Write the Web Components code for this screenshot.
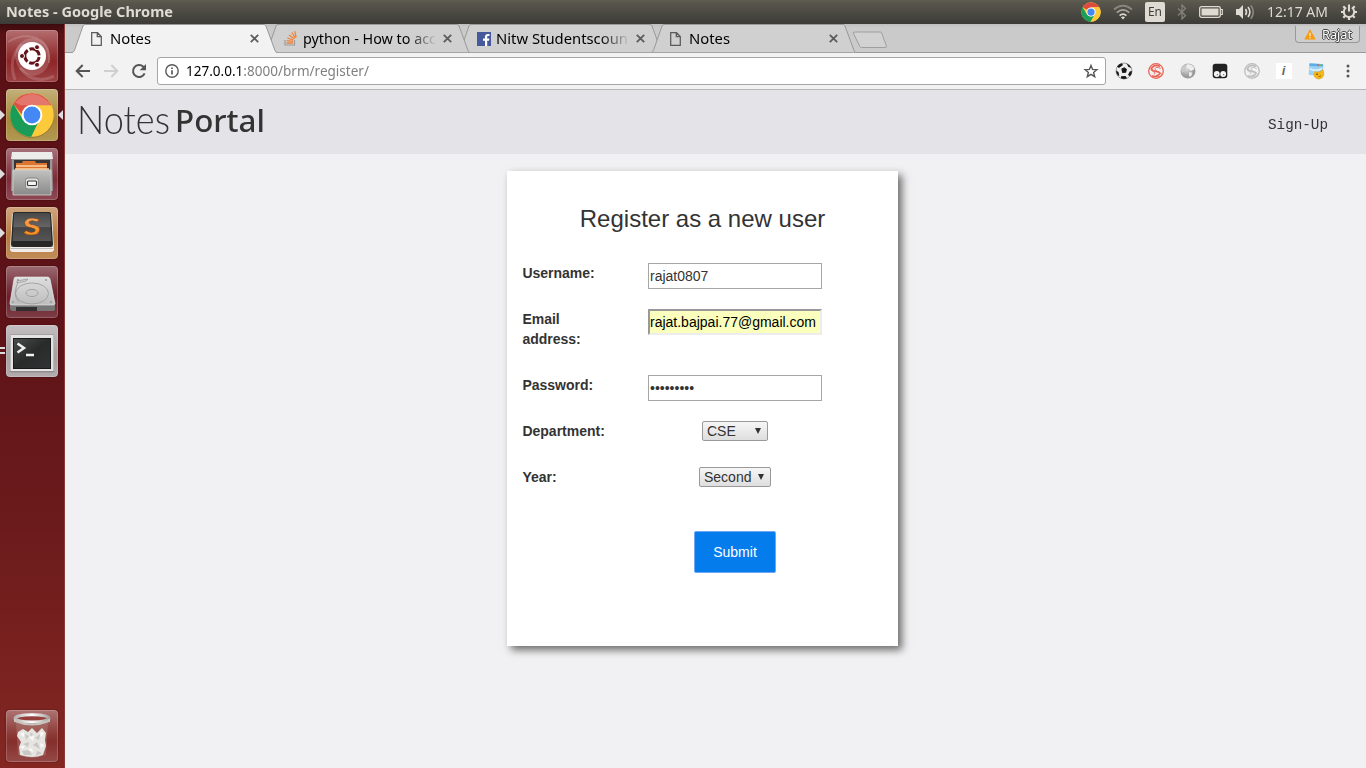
<!DOCTYPE html>
<html lang="en">
<head>
<meta charset="utf-8">
<title>Notes</title>
<style>
html,body{margin:0;height:768px;overflow:hidden;background:#f1f1f3}
</style>
</head>
<body>
<desktop-shell></desktop-shell>
<script>
const define = (name, css, html) => customElements.define(name, class extends HTMLElement {
  connectedCallback() {
    if (this.shadowRoot) return;
    const t = document.createElement('template');
    t.innerHTML = `<style>*{box-sizing:border-box}${css}</style>` + (typeof html === 'function' ? html(this) : html);
    this.attachShadow({mode: 'open'}).append(t.content.cloneNode(true));
  }
});

/* Text set to an exact advance width, given by the w attribute. */
customElements.define('fit-text', class extends HTMLElement {
  connectedCallback() {
    if (this.shadowRoot) return;
    const root = this.attachShadow({mode: 'open'});
    root.innerHTML = `<style>:host{display:block;flex:none;white-space:pre}span{display:inline-block;transform-origin:0 50%}</style><span><slot></slot></span>`;
    const fit = () => {
      const w = +this.getAttribute('w'), s = root.querySelector('span');
      this.style.width = w + 'px';
      if (s.offsetWidth) s.style.transform = `scaleX(${w / s.getBoundingClientRect().width})`;
    };
    queueMicrotask(() => { root.querySelector('span').style.transform = 'none'; fit(); });
  }
});

const chrome = `<circle cx="16" cy="16" r="15.5" fill="#fbc936"/>
<path d="M16 16 2.6 8.2A15.5 15.5 0 0 1 29.4 8.5H16z" fill="#dd4b3e"/>
<path d="M2.6 8.2 9.5 20 16 23.5 22 20 15.5 31.5A15.5 15.5 0 0 1 2.6 8.2" fill="#1a9f5b"/>
<path d="M29.4 8.5H16L22.5 12.2V20L15.5 31.5A15.5 15.5 0 0 0 29.4 8.5" fill="#fdca3c"/>
<circle cx="16" cy="16" r="7.3" fill="#fff"/><circle cx="16" cy="16" r="5.8" fill="#4587f3"/>`;

const icons = {
  chrome: [32, 32, chrome],
  wifi: [20, 16, `<g fill="none" stroke-width="1.7"><path d="M1 5.5Q10-2.2 19 5.5" stroke="#8b887f"/><path d="M3.8 8.6Q10 3.2 16.2 8.6" stroke="#aaa79f"/><path d="M6.6 11.6Q10 8.6 13.4 11.6" stroke="#dfdbd2"/></g><path d="M8 13.2Q10 11.6 12 13.2L10 15.5z" fill="#dfdbd2"/>`],
  bluetooth: [10, 16, `<path d="M1 4.5 8.5 11.5 5 15V1L8.5 4.5 1 11.5" fill="none" stroke="#85827a" stroke-width="1.3"/>`],
  battery: [24, 12, `<rect x=".7" y=".7" width="20.6" height="10.6" rx="1.8" fill="none" stroke="#dfdbd2" stroke-width="1.3"/><rect x="2.5" y="2.5" width="17" height="7" fill="#dfdbd2"/><path d="M22 3.5h1.3v5H22" fill="none" stroke="#dfdbd2" stroke-width="1.2"/>`],
  sound: [20, 16, `<path d="M1 5h3l4-4v14l-4-4H1z" fill="#dfdbd2"/><g fill="none" stroke-width="1.6"><path d="M10.5 5q2 3 0 6M13 3q3.8 5 0 10" stroke="#dfdbd2"/><path d="M15.8 1.2q5 6.8 0 13.6" stroke="#8b887f"/></g>`],
  gear: [18, 18, `<g fill="none" stroke="#dfdbd2"><path d="M6.2 4.5A5.2 5.2 0 1 0 11.8 4.5" stroke-width="2"/><path d="M9 1.5v7" stroke-width="2"/><path d="M1 9h3M14 9h3M3.3 3.3 5 5M14.7 3.3 13 5M3.3 14.7 5 13M14.7 14.7 13 13M9 14v3" stroke-width="2.2"/></g>`],
  page: [11, 14, `<path d="M.7.7h5.8l3.8 3.8v8.8H.7z M6.3.7v4h4" fill="none" stroke="#5a5a5a" stroke-width="1.25"/>`],
  stack: [13, 15, `<path d="M1 9v5h9.5V9" fill="none" stroke="#9a9b9c" stroke-width="1.2"/><g stroke="#f08337" stroke-width="1.3"><path d="M2.5 12H9M2.7 9.6l6.4.7M3.3 7l6 1.9M5 4l5.3 3.7M7.8 1.5 11.3 7M10.7.2l1.4 6.3"/></g>`],
  facebook: [14, 14, `<rect width="14" height="14" fill="#46599c"/><path d="M8 14V8.7H6V6.5h2V4.8C8 2.8 9.2 2 10.8 2H12.5v2.1H11.2c-.8 0-1 .4-1 1v1.4h2.2L12 8.7h-1.8V14z" fill="#fff"/>`],
  close: [9, 9, `<path d="M.8.8 8.2 8.2M8.2.8.8 8.2" stroke="#5c5c5c" stroke-width="1.8"/>`],
  back: [16, 14, `<path d="M15 7H2M7.7 1 1.7 7l6 6" fill="none" stroke="#555" stroke-width="2"/>`],
  forward: [16, 14, `<path d="M1 7h13M8.3 1l6 6-6 6" fill="none" stroke="#cfcfcf" stroke-width="2"/>`],
  reload: [16, 16, `<path d="M13.6 10.3A6 6 0 1 1 12.3 3.8L14 5.6" fill="none" stroke="#555" stroke-width="2"/><path d="M15 1v6.3H8.7z" fill="#555"/>`],
  info: [14, 14, `<circle cx="7" cy="7" r="6.2" fill="none" stroke="#5a5a5a" stroke-width="1.4"/><path d="M7 6.2v4.3M7 3.4V5" stroke="#5a5a5a" stroke-width="1.7"/>`],
  star: [16, 16, `<path d="M8 2.4 9.6 6.4 13.9 6.7 10.6 9.5 11.7 13.7 8 11.4 4.3 13.7 5.4 9.5 2.1 6.7 6.4 6.4z" fill="none" stroke="#555" stroke-width="1.4"/>`],
  ball: [18, 18, `<circle cx="9" cy="9" r="8" fill="#eee" stroke="#777" stroke-width=".7"/><path d="M6.3 6.8 9.3 5.2 12 7.3 11 10.8 7.3 11zM2 4.5Q4 1.5 7 1.3L8 3 4 6zM11.5 1.5Q15 2.5 16.3 6L13.5 5zM1 8.5 3.5 10 4.3 13.8 2.8 13.5Q1 11 1 8.5M17 9Q17 12 15 14.3L13 13 14.7 9.5zM6 14.2 10.5 14 12 16.3Q9 17.5 6 16.3z" fill="#171717"/>`],
  sred: [16, 16, `<g fill="none" stroke="#ea6557"><circle cx="8" cy="8" r="7.3" stroke-width="1.3"/><path d="M12 3.4Q7 1 4.4 4.2T8 8.3 10.3 12 4 12.5" stroke-width="1.7"/><path d="M12.8 5.6Q8 3.2 7.2 5.2T12 10 8.2 14M3.2 3.5Q1.6 7 5.3 8.7T5.8 11" stroke-width=".9"/></g>`],
  sgray: [16, 16, `<g fill="none" stroke="#bdbdbd"><circle cx="8" cy="8" r="7.3" stroke-width="1.3"/><path d="M12 3.4Q7 1 4.4 4.2T8 8.3 10.3 12 4 12.5" stroke-width="1.7"/><path d="M12.8 5.6Q8 3.2 7.2 5.2T12 10 8.2 14M3.2 3.5Q1.6 7 5.3 8.7T5.8 11" stroke-width=".9"/></g>`],
  globe: [16, 16, `<defs><radialGradient id="g" cx=".4" cy=".35"><stop offset="0" stop-color="#ddd"/><stop offset="1" stop-color="#9c9c9c"/></radialGradient></defs><circle cx="8" cy="8" r="7.5" fill="url(#g)"/><path d="M7 1.3Q13 1 14.5 6L11 8 8 5.5 6 4zM9 9.2l3.3.2-1 3.6-2.3.5z" fill="#eee"/><path d="M1 6Q3 2 5 2l1 5-4 3z" fill="#c9c9c9"/>`],
  monkey: [16, 16, `<rect x=".7" y=".7" width="14.6" height="14.6" rx="2.8" fill="#222"/><circle cx="4.8" cy="11" r="2.9" fill="#f5f5f5"/><circle cx="11.2" cy="11" r="2.9" fill="#f5f5f5"/><circle cx="5.3" cy="11.7" r=".6" fill="#555"/><circle cx="11.7" cy="11.7" r=".6" fill="#555"/>`],
  page2: [16, 16, `<rect width="16" height="16" fill="#fff"/><text x="5.7" y="12" font-family="Liberation Sans" font-style="italic" font-weight="700" font-size="13" fill="#6a6a6a">i</text>`],
  webpig: [18, 18, `<rect x="2" y="1.5" width="14" height="12" rx="1" transform="rotate(4 9 8)" fill="#9bd1f4"/><path d="M2.5 1.5 16 2.3V4.5L2.4 3.9z" fill="#5aafe6"/><circle cx="11" cy="3" r=".9" fill="#e85b50"/><circle cx="14" cy="3.2" r=".9" fill="#7dc13b"/><path d="M3 6Q9 9 15 5.5v2Q9 11 3 8z" fill="#d8effc"/><path d="M7.5 9.5 9.5 10l3-.2 3.4-2 .8 2q.8 6.6-4.7 7.2-5.3 0-5-5.4" fill="#f5b619" stroke="#d9980f" stroke-width=".5"/><circle cx="10" cy="12.2" r=".8" fill="#4d3305"/><path d="M11.5 14.4q1.4.8 2.4-.8" fill="none" stroke="#7d4f05" stroke-width=".8"/>`],
  more: [4, 16, `<g fill="#555"><circle cx="2" cy="3" r="1.5"/><circle cx="2" cy="8" r="1.5"/><circle cx="2" cy="13" r="1.5"/></g>`],
  warn: [12, 11, `<path d="M6 .3 11.7 10.6H.3z" fill="#f89a0b"/><path d="M6 3.7v3.5M6 8v1.3" stroke="#fff" stroke-width="1.1"/>`],
  newtab: [36, 18, `<path d="M3.5 1H28.2Q29.2 1 29.7 2L34.4 15Q34.7 16.5 33.3 16.5H9.3Q8.3 16.5 7.8 15.5L1.3 2Q1.2 1 3.5 1z" fill="#d2d2d2" stroke="#9f9f9f" stroke-width="1"/>`],
  ubuntu: [52, 52, `<g fill="none" stroke="#fff" stroke-opacity=".16"><path d="M2 12Q14 4 27 7 45 12 43 33" stroke-width="2"/><path d="M9 50Q1 28 16 14M48 46Q28 56 14 38" stroke-width="3"/></g><path d="M9 27Q10 9 27 8q17 3 17 21-2 14-16 17Q11 44 9 27" fill="#fff" opacity=".17"/><circle cx="26" cy="26" r="14" fill="#fff"/><circle cx="26" cy="26" r="7.2" fill="none" stroke="#641418" stroke-width="3" stroke-dasharray="13.1 2" stroke-dashoffset="-1"/><g fill="#641418" stroke="#fff" stroke-width="1"><circle cx="16" cy="26" r="2.5"/><circle cx="31" cy="17.2" r="2.5"/><circle cx="31" cy="34.8" r="2.5"/></g>`],
  bigchrome: [52, 52, `<circle cx="26" cy="27" r="22" fill="#69521a" opacity=".4"/><g transform="translate(3.6 3.6) scale(1.4)"><circle cx="16" cy="16" r="15.6" fill="#fdca3c"/><path d="M2.6 8A15.6 15.6 0 0 1 29.8 9H16L9 16z" fill="#dd5145"/><path d="M2.7 7.9 9.6 19.5 16 22.6 20.5 21 15.5 31.6A15.6 15.6 0 0 1 2.7 7.9" fill="#189c58"/><path d="M4 7Q16-5 28 7L29 9H8z" fill="#fff" opacity=".22"/><circle cx="16" cy="16" r="7.4" fill="#fff"/><circle cx="16" cy="16" r="6" fill="#4488f4"/></g>`],
  files: [52, 52, `<defs><linearGradient id="f" x2="0" y2="1"><stop stop-color="#c1c1c0"/><stop offset="1" stop-color="#898989"/></linearGradient></defs><path d="M6 5H46L47 43H5z" fill="#989696"/><path d="M6 4H46L47 11H5z" fill="#ececea"/><rect x="8" y="12" width="36" height="11" fill="#383536"/><path d="M10 15h6l1-2h12l1 2h11v7H10z" fill="#dd7532"/><path d="M10 18H41M9 21H43" stroke="#ffd49e" stroke-width="1.4"/><path d="M7 22H45V47H7z" fill="url(#f)" stroke="#d6d6d4" stroke-width=".8"/><rect x="19.5" y="30" width="13" height="11" rx="2.5" fill="#dededc" stroke="#858585"/><rect x="21.5" y="33" width="9" height="4.5" rx="1" fill="#f4f4f3" stroke="#373737" stroke-width="1.1"/>`],
  sublime: [52, 52, `<defs><linearGradient id="s" x2="0" y2="1"><stop stop-color="#494949"/><stop offset=".5" stop-color="#656565"/><stop offset=".52" stop-color="#454545"/><stop offset="1" stop-color="#555"/></linearGradient><linearGradient id="o" x2="0" y2="1"><stop stop-color="#eca86e"/><stop offset="1" stop-color="#ff8906"/></linearGradient></defs><path d="M6 7 4 42Q4 45 7 45H45Q48 45 48 42L46 7z" fill="#f1ece8"/><path d="M4.5 39.5h43M4.5 41.5h43" stroke="#999" stroke-width=".6"/><path d="M9 5H43Q45 5 45.2 8L47 37Q47 40 44 40H8Q5 40 5 37L6.8 8Q7 5 9 5" fill="#272727"/><path d="M10 6H42Q44 6 44 8L45.5 34H6.5L8 8Q8 6 10 6" fill="url(#s)"/><text x="17.1" y="28.3" font-family="Lato" font-weight="900" font-size="23" textLength="17.5" lengthAdjust="spacingAndGlyphs" fill="url(#o)" stroke="#6b3519" stroke-width=".4">S</text>`],
  disk: [52, 52, `<defs><linearGradient id="d" x2="0" y2="1"><stop stop-color="#dedede"/><stop offset="1" stop-color="#bdbdbd"/></linearGradient></defs><path d="M10 12 42 12Q44 12 44.5 14L49 37v6Q49 45 46 45H7Q4 45 4 42V37L8 14Q8 12 10 12" fill="#777"/><path d="M10 11H42Q43 11 44 13L49 38Q49 39 46 39H7Q3 39 4 37L8 13Q8 11 10 11" fill="url(#d)" stroke="#eee" stroke-width=".6"/><path d="M10 41H31V45H10z" fill="#303030"/><g fill="none" stroke="#999" stroke-width=".8"><ellipse cx="26" cy="27.5" rx="16.5" ry="10.5"/><ellipse cx="26" cy="27" rx="6" ry="3.6"/><path d="M11 15 22 13 20 15 11 17zM12 16Q6 30 13 36"/></g><g fill="#969696"><circle cx="12" cy="14" r="1"/><circle cx="40" cy="14" r="1"/><circle cx="7" cy="36" r="1"/><circle cx="45" cy="36" r="1"/></g>`],
  terminal: [52, 52, `<defs><linearGradient id="t" x2="1" y2="1"><stop stop-color="#4a4b4b"/><stop offset=".5" stop-color="#292b2b"/><stop offset="1" stop-color="#303333"/></linearGradient></defs><rect x="4" y="9.5" width="44" height="38" rx="1" fill="#918d8e"/><rect x="4.5" y="10" width="43" height="36" fill="#e4e3e2"/><rect x="7" y="13" width="38" height="31" fill="#181a1b"/><rect x="8" y="14" width="36" height="29" fill="url(#t)"/><path d="M11.5 18.5 18 23 11.5 27.5M20 30H28" fill="none" stroke="#f1f1ef" stroke-width="2.5"/>`],
  trash: [52, 52, `<defs><linearGradient id="r"><stop stop-color="#b5b2af"/><stop offset=".5" stop-color="#fff"/><stop offset="1" stop-color="#a4a09e"/></linearGradient></defs><path d="M10 12 12 45Q26 51 40 45L42 12z" fill="#b88b83" opacity=".35"/><path d="M12 22 17 19 22 22 26 18 31 23 36 18 40 23 39 30 40 36 37 45Q27 49 14 45L13 37 15 32 11 26z" fill="#e5e4e0"/><g fill="#c9c7c3"><path d="M19 24 23 26 20 30zM29 28 34 24 33 30zM17 34 23 32 22 37zM27 35 31 32 34 39zM16 41 23 40 26 45 18 45zM31 41 36 43 30 46zM24 22 27 24 25 27z"/></g><g fill="#fafaf7"><path d="M14 24 18 22 18 27zM23 27 28 26 27 31zM34 22 38 23 35 27zM14 37 17 39 19 35zM34 33 38 35 35 38zM25 38 28 42 22 40z"/></g><ellipse cx="26" cy="8.3" rx="17" ry="3.6" fill="#963e3b" stroke="url(#r)" stroke-width="3"/><path d="M9 9v2Q26 18 43 11v-2" fill="none" stroke="#c6c3bf" stroke-width="2"/>`]
};
define('line-icon', `:host{display:block;flex:none}svg{display:block}`, el => {
  const [w, h, body] = icons[el.getAttribute('name')], s = el.getAttribute('size');
  return `<svg width="${s || w}" height="${s || h}" viewBox="0 0 ${w} ${h}">${body}</svg>`;
});

define('menu-bar', `:host{display:flex;height:24px;align-items:center;justify-content:space-between;padding-left:6px;padding-right:8px;background:linear-gradient(#605d50 0,#5a574e 8%,#3c3b37 100%);color:#dfdbd2;font:14px/24px "Noto Sans",sans-serif}
.title{font-weight:700}.tray{display:grid;grid-template-columns:20px 20px 20px 10px 24px 20px 61px 18px;column-gap:12px;align-items:center;justify-items:start}
.en{width:20px;height:20px;border-radius:2px;background:#dfdbd2;color:#3c3b37;font-size:12.5px;line-height:20px;padding-left:3px}`,
`<fit-text class="title" w="167">Notes - Google Chrome</fit-text>
<div class="tray"><line-icon name="chrome" size="20"></line-icon><line-icon name="wifi"></line-icon><div class="en"><fit-text w="14">En</fit-text></div><line-icon name="bluetooth"></line-icon><line-icon name="battery"></line-icon><line-icon name="sound"></line-icon><fit-text w="61">12:17 AM</fit-text><line-icon name="gear"></line-icon></div>`);

define('launcher-tile', `:host{display:flex;align-items:center;position:relative;height:52px;padding-left:6px}
.t{width:52px;height:52px;border-radius:4px;background:linear-gradient(#fff5,#fff1 45%,#fff0 60%,#fff2),var(--tile);box-shadow:inset 0 0 0 1px #ffffff30,0 0 2px #0006}
.l,.r,.eq{position:absolute;top:21px;width:0;height:0;border:5px solid transparent}
.l{left:0;border-left-color:#ddd;border-right:0}.r{right:1px;border-right-color:#ddd;border-left:0}
.eq{left:0;top:22px;width:5px;height:7px;border:solid #ddd;border-width:2px 0}`,
el => { const m = el.getAttribute('mark') || ''; return `<div class="t"><line-icon name="${el.getAttribute('icon')}"></line-icon></div>` + (m.includes('l') ? '<i class="l"></i>' : '') + (m.includes('r') ? '<i class="r"></i>' : '') + (m.includes('e') ? '<i class="eq"></i>' : ''); });

define('app-launcher', `:host{display:flex;flex-direction:column;gap:7px;width:65px;padding:6px 0 6px;background:linear-gradient(#3c0b0e 0,#5a1116 10px,#5e1318 40%,#6c1b1c 68%,#842722 100%);border-right:1px solid #8a3a37}.sp{flex:1}`,
`<launcher-tile icon="ubuntu" style="--tile:#8e2628"></launcher-tile>
<launcher-tile icon="bigchrome" mark="lr" style="--tile:#a8893a"></launcher-tile>
<launcher-tile icon="files" mark="l" style="--tile:#7d2d3a"></launcher-tile>
<launcher-tile icon="sublime" mark="l" style="--tile:#b87b3f"></launcher-tile>
<launcher-tile icon="disk" style="--tile:#6a202a"></launcher-tile>
<launcher-tile icon="terminal" mark="e" style="--tile:#a79fa2"></launcher-tile>
<div class="sp"></div><launcher-tile icon="trash" style="--tile:#852e2b"></launcher-tile>`);

define('browser-tab', `:host{display:block;flex:none;position:relative;width:205px;height:29px;margin-right:-12px}
.bg{position:absolute;inset:0}.row{position:relative;display:flex;height:29px;align-items:center;padding-left:18px}
.ic{width:20px;padding-left:1px}.label{width:134px;overflow:hidden;font:15px/20px "Noto Sans",sans-serif;color:#000;margin-top:-2px}
:host([cut]) .label{-webkit-mask-image:linear-gradient(90deg,#000 104px,transparent 134px)}.x{margin-left:6px}`,
el => `<svg class="bg" width="205" height="29"><path d="M0 28.5Q1.8 28.3 2.4 26.5L11 2Q11.6.5 13 .5H192Q193.2.5 194 2L203 26.5Q203.6 28.3 205 28.5${el.hasAttribute('active') ? 'V29H0z' : ''}" fill="${el.hasAttribute('active') ? '#f2f2f2' : '#d0d0d0'}" stroke="#999"/>${el.hasAttribute('active') ? '<path d="M1 28.5H204" stroke="#f2f2f2"/>' : '<path d="M0 28.5H205" stroke="#a4a4a4"/>'}</svg>
<div class="row"><div class="ic"><line-icon name="${el.getAttribute('icon')}"></line-icon></div><div class="label"><fit-text w="${el.getAttribute('w')}"><slot></slot></fit-text></div><line-icon class="x" name="close"></line-icon></div>`);

define('tab-strip', `:host{display:flex;height:29px;background:linear-gradient(#bdbdbd,#cacaca 3px,#cbcbcb);box-shadow:inset 0 -1px #999;padding-left:6.5px}
browser-tab:nth-child(1){z-index:4}browser-tab:nth-child(2){z-index:3}browser-tab:nth-child(3){z-index:2}
.nt{margin:7px 0 0 8.5px}.user{display:flex;align-items:center;gap:6px;margin:2px 6px 0 auto;width:65px;height:17px;border:1px solid #999;border-top:0;border-radius:0 0 4px 4px;padding-left:8px;background:#cecece;color:#fff;font:13px/17px "Noto Sans",sans-serif;text-shadow:-1px 0 #444,1px 0 #444,0 -1px #444,0 1px #444}`,
`<browser-tab active icon="page" w="41">Notes</browser-tab><browser-tab cut icon="stack" w="133">python - How to acc</browser-tab><browser-tab cut icon="facebook" w="132">Nitw Studentscoun</browser-tab><browser-tab icon="page" w="41">Notes</browser-tab>
<line-icon class="nt" name="newtab"></line-icon><div class="user"><line-icon name="warn"></line-icon><fit-text w="30">Rajat</fit-text></div>`);

define('tool-bar', `:host{display:flex;align-items:center;height:37px;background:#f2f2f2;border-bottom:1px solid #b6b4b6;padding-left:10px}
.nav{display:flex;gap:12px;align-items:center;width:82px}.box{display:flex;align-items:center;width:949px;height:28px;border:1px solid #a6a6a6;border-radius:3px;background:#fff;padding:0 6px 0 7px;font:14px/26px "Noto Sans",sans-serif;color:#808080}
.box b{font-weight:400;color:#000}.box fit-text{margin-left:7px}.star{margin-left:auto}
.ext{display:grid;grid-template-columns:repeat(8,32px);justify-items:center;align-items:center;margin-left:2px}`,
`<div class="nav"><line-icon name="back"></line-icon><line-icon name="forward"></line-icon><line-icon name="reload"></line-icon></div>
<div class="box"><line-icon name="info"></line-icon><fit-text w="183"><b>127.0.0.1</b>:8000/brm/register/</fit-text><line-icon class="star" name="star"></line-icon></div>
<div class="ext">${['ball','sred','globe','monkey','sgray','page2','webpig','more'].map(n => `<line-icon name="${n}"></line-icon>`).join('')}</div>`);

define('site-header', `:host{display:flex;align-items:center;height:64px;background:#e4e4e8;padding:0 38px 0 12px;color:#333}
.n{font:300 39px/60px Lato,sans-serif;margin-top:-6px}.p{margin:-4px auto 0 5px;font:500 31px/62px "Noto Sans",sans-serif}.s{font:14px/20px "Liberation Mono",monospace;margin-top:5px}`,
`<fit-text class="n" w="93">Notes</fit-text><fit-text class="p" w="90">Portal</fit-text><fit-text class="s" w="60">Sign-Up</fit-text>`);

define('form-row', `:host{display:grid;grid-template-columns:126px 174px;min-height:46px;color:#333;font:14px/20px "Liberation Sans",Arial,sans-serif}
label{font-weight:700;width:90px;padding-left:.4px}.f{display:flex;justify-content:center;align-items:flex-start}`,
el => `<label>${el.getAttribute('label') || ''}</label><div class="f"><slot></slot></div>`);

define('text-field', `:host{display:block;width:174px;height:26px;border:1px solid #a6a6a6;padding-left:1px;background:#fff;line-height:24px;white-space:pre}
:host([autofill]){border:2px solid;border-color:#999 #ededed #ededed #999;background:#faffbd;color:#000;padding-left:0;line-height:22px}`, `<slot></slot>`);

define('drop-down', `:host{display:flex;justify-content:space-between;align-items:center;height:20px;border:1px solid #999;border-radius:2px;padding:0 6px 0 4px;background:linear-gradient(#f6f6f6,#dedede);line-height:18px}i{border:3px solid transparent;border-top:6px solid #333;border-bottom:0;margin-top:-1px}`, `<slot></slot><i></i>`);

define('submit-button', `:host{display:block;flex:none;width:82px;height:42px;margin-top:18px;border:1px solid #6ba7f5;border-radius:2px;background:#057ceb;color:#fff;text-align:center;line-height:40px}`, `<slot></slot>`);

define('register-card', `:host{display:block;width:391px;height:475px;margin:17px 0 0 442px;padding:0 15px;background:#fff;box-shadow:4px 4px 8px #6a6a6a;color:#333}
h1{margin:0;padding-top:35px;height:92px;text-align:center;font:24px/26px "Liberation Sans",Arial,sans-serif}.tall{min-height:66px}`,
`<h1>Register as a new user</h1>
<form-row label="Username:"><text-field>rajat0807</text-field></form-row>
<form-row class="tall" label="Email address:"><text-field autofill>rajat.bajpai.77@gmail.com</text-field></form-row>
<form-row label="Password:"><text-field>•••••••••</text-field></form-row>
<form-row label="Department:"><drop-down style="width:66px">CSE</drop-down></form-row>
<form-row label="Year:"><drop-down style="width:72px">Second</drop-down></form-row>
<form-row><submit-button>Submit</submit-button></form-row>`);

define('desktop-shell', `:host{display:grid;grid-template:24px 744px/65px 1301px;width:1366px;height:768px}menu-bar{grid-column:1/3}main{background:#f1f1f3}`,
`<menu-bar></menu-bar><app-launcher></app-launcher><main><tab-strip></tab-strip><tool-bar></tool-bar><site-header></site-header><register-card></register-card></main>`);
</script>
</body>
</html>
